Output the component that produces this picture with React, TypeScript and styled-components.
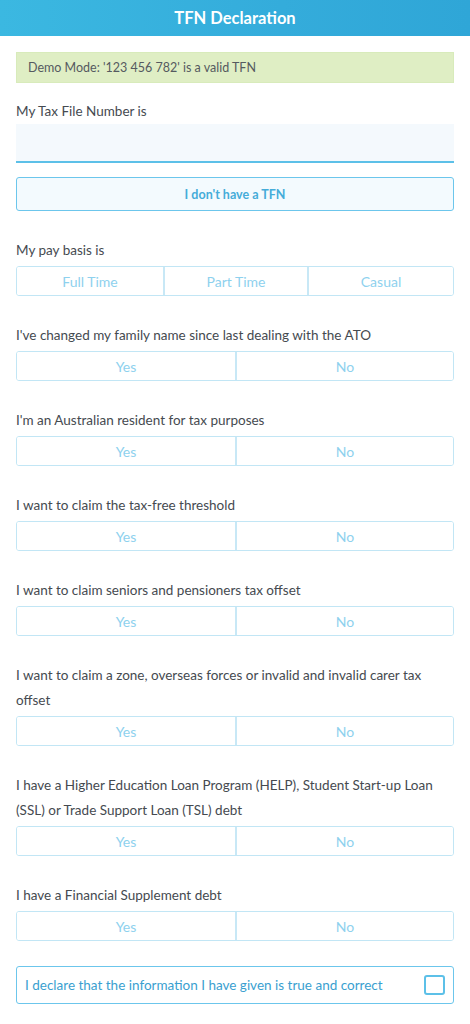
import React from "react";
import styled, { createGlobalStyle } from "styled-components";

const Global = createGlobalStyle`
  html, body { margin: 0; padding: 0; background: #fff; }
  body { font-family: Lato, "Open Sans", Arial, sans-serif; -webkit-font-smoothing: antialiased; }
  * { box-sizing: border-box; }
`;

const Page = styled.div`
  width: 470px;
  background: #fff;
`;

const Header = styled.header`
  height: 36px;
  background: linear-gradient(90deg, #3bb8e1 0%, #34acdb 60%, #2fa6d7 100%);
  color: #fff;
  display: flex;
  align-items: center;
  justify-content: center;
  font-size: 16.5px;
  font-weight: 700;
`;

const Body = styled.main`
  padding: 16px 16px 20px 16px;
  display: flex;
  flex-direction: column;
`;

const Notice = styled.div`
  height: 31px;
  background: #dfeec4;
  border: 1px solid #d8ebbb;
  display: flex;
  align-items: center;
  padding-left: 11px;
  font-size: 12.5px;
  color: #555a60;
  margin-bottom: 16px;
`;

const Section = styled.section<{ $gap?: number }>`
  display: flex;
  flex-direction: column;
  margin-bottom: ${(p) => p.$gap ?? 27}px;
`;

const Label = styled.div`
  font-size: 13.5px;
  line-height: 25px;
  color: #454a50;
  margin-bottom: 3px;
`;

const TfnLabel = styled(Label)`
  margin-bottom: 0;
`;

const Input = styled.input`
  height: 39px;
  width: 100%;
  border: none;
  border-bottom: 2px solid #5cc0e8;
  background: #f4f9fd;
  outline: none;
  font-family: inherit;
  font-size: 14px;
  margin-bottom: 14px;
`;

const NoTfnButton = styled.button`
  height: 34px;
  width: 100%;
  border: 1px solid #6cc6ec;
  border-radius: 3px;
  background: #f3fafe;
  color: #45acd9;
  font-family: inherit;
  font-size: 12.5px;
  font-weight: 700;
`;

const Segmented = styled.div<{ $cols: number }>`
  display: grid;
  grid-template-columns: ${(p) => (p.$cols === 3 ? "146px 144px 1fr" : "218px 1fr")};
  height: 30px;
  border: 1px solid #c2e6f5;
  border-radius: 3px;
  overflow: hidden;
`;

const SegButton = styled.button`
  border: none;
  background: #fff;
  color: #8ed1ee;
  font-family: inherit;
  font-size: 14px;
  padding: 0;
  & + & { border-left: 2px solid #c8e8f6; }
`;

const Declare = styled.label`
  height: 38px;
  border: 1px solid #6cc6ec;
  border-radius: 3px;
  display: flex;
  align-items: center;
  justify-content: space-between;
  padding: 0 8px 0 8px;
  color: #3a9fd0;
  font-size: 13.5px;
`;

const Check = styled.span`
  width: 21px;
  height: 20px;
  border: 2px solid #5cc0e8;
  border-radius: 3px;
  background: #fff;
`;

const questions = [
  "I've changed my family name since last dealing with the ATO",
  "I'm an Australian resident for tax purposes",
  "I want to claim the tax-free threshold",
  "I want to claim seniors and pensioners tax offset",
  "I want to claim a zone, overseas forces or invalid and invalid carer tax offset",
  "I have a Higher Education Loan Program (HELP), Student Start-up Loan (SSL) or Trade Support Loan (TSL) debt",
  "I have a Financial Supplement debt",
];

export default function App() {
  return (
    <Page>
      <Global />
      <Header>TFN Declaration</Header>
      <Body>
        <Notice>Demo Mode: '123 456 782' is a valid TFN</Notice>
        <Section>
          <TfnLabel>My Tax File Number is</TfnLabel>
          <Input />
          <NoTfnButton>I don't have a TFN</NoTfnButton>
        </Section>
        <Section>
          <Label>My pay basis is</Label>
          <Segmented $cols={3}>
            <SegButton>Full Time</SegButton>
            <SegButton>Part Time</SegButton>
            <SegButton>Casual</SegButton>
          </Segmented>
        </Section>
        {questions.map((q, i) => (
          <Section key={i} $gap={i === questions.length - 1 ? 25 : 27}>
            <Label>{q}</Label>
            <Segmented $cols={2}>
              <SegButton>Yes</SegButton>
              <SegButton>No</SegButton>
            </Segmented>
          </Section>
        ))}
        <Declare>
          I declare that the information I have given is true and correct
          <Check />
        </Declare>
      </Body>
    </Page>
  );
}
